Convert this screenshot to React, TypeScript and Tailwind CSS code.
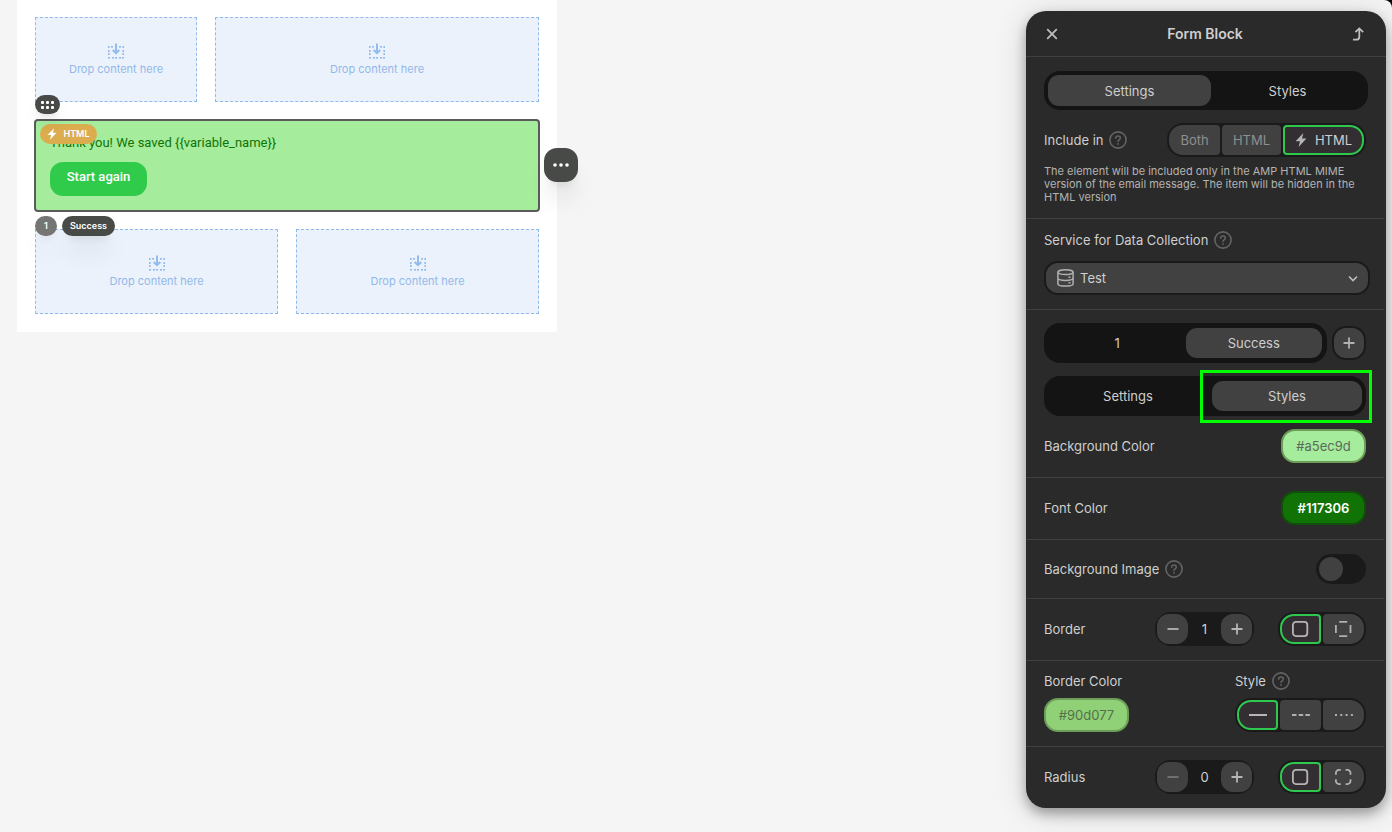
import { useState, type ReactNode } from "react";
import clsx from "clsx";

function DropIcon() {
    return (
        <svg width="18" height="16" viewBox="0 0 18 16" fill="#93bcec">
            {[1, 5, 8, 12, 15].map((x) => (
                <rect key={x} x={x} y="14" width="2" height="1.6" />
            ))}
            {[3, 7, 10].map((y) => (
                <g key={y}>
                    <rect x="1" y={y} width="1.6" height="2" />
                    <rect x="15.4" y={y} width="1.6" height="2" />
                </g>
            ))}
            <rect x="4" y="3" width="2" height="1.6" />
            <rect x="12" y="3" width="2" height="1.6" />
            <path d="M9 0.5v9.5M5.7 7L9 10.2L12.3 7" fill="none" stroke="#93bcec" strokeWidth="2" />
        </svg>
    );
}

function DropZone({ className }: { className?: string }) {
    return (
        <div
            className={clsx(
                "flex h-[85px] flex-col items-center justify-center gap-0.5 border border-dashed border-[#8fbaec] bg-[#ebf2fc] text-[11px] leading-4 text-[#93b9e8]",
                className,
            )}
        >
            <DropIcon />
            <span>Drop content here</span>
        </div>
    );
}

function BoltIcon({ className }: { className?: string }) {
    return (
        <svg className={className} viewBox="0 0 12 14" fill="currentColor">
            <path d="M8.4 0L0.6 8.2H5L3.6 14L11.4 5.6H7L8.4 0Z" />
        </svg>
    );
}

function HelpIcon() {
    return (
        <svg className="shrink-0 text-[#646464]" width="18" height="18" viewBox="0 0 18 18" fill="none" stroke="currentColor">
            <circle cx="9" cy="9" r="8.1" strokeWidth="1.6" />
            <path
                d="M6.7 7.3C6.7 5.9 7.7 5.1 9 5.1s2.3.8 2.3 2c0 1.7-2.3 1.7-2.3 3.3"
                strokeWidth="1.5"
                strokeLinecap="round"
            />
            <circle cx="9" cy="12.9" r="0.9" fill="currentColor" stroke="none" />
        </svg>
    );
}

function MinusIcon() {
    return (
        <svg width="12" height="12" viewBox="0 0 12 12" stroke="currentColor" strokeWidth="1.8">
            <path d="M0.5 6h11" />
        </svg>
    );
}

function PlusIcon() {
    return (
        <svg width="12" height="12" viewBox="0 0 12 12" stroke="currentColor" strokeWidth="1.8">
            <path d="M0.5 6h11M6 0.5v11" />
        </svg>
    );
}

function SquareIcon() {
    return (
        <svg width="17" height="16" viewBox="0 0 17 16" fill="none" stroke="currentColor" strokeWidth="1.8">
            <rect x="0.9" y="0.9" width="14.4" height="14.2" rx="3" />
        </svg>
    );
}

function SidesIcon() {
    return (
        <svg width="17" height="16" viewBox="0 0 17 16" fill="none" stroke="currentColor" strokeWidth="1.8">
            <path d="M4.2 0.9h8M4.2 15.1h8M0.9 4v8M15.5 4v8" />
        </svg>
    );
}

function CornersIcon() {
    return (
        <svg width="17" height="16" viewBox="0 0 17 16" fill="none" stroke="currentColor" strokeWidth="1.8">
            <path d="M0.9 5.8V3.9a3 3 0 0 1 3-3h1.9M10.6 0.9h1.9a3 3 0 0 1 3 3v1.9M15.5 10.2v1.9a3 3 0 0 1-3 3h-1.9M5.8 15.1H3.9a3 3 0 0 1-3-3v-1.9" />
        </svg>
    );
}

function LineIcon({ dash }: { dash?: string }) {
    return (
        <svg width="18" height="2" viewBox="0 0 18 2" stroke="currentColor" strokeWidth="2">
            <path d="M0 1h18" strokeDasharray={dash} />
        </svg>
    );
}

interface SegmentedProps {
    label: string;
    options: { name: string; content: ReactNode; width: string }[];
    initial: number;
}

function Segmented({ label, options, initial }: SegmentedProps) {
    const [active, setActive] = useState(initial);
    return (
        <div role="group" aria-label={label} className="flex gap-0.5 rounded-2xl bg-[#1a1a1a] p-0.5">
            {options.map((option, i) => (
                <button
                    key={i}
                    type="button"
                    aria-label={option.name}
                    aria-pressed={active === i}
                    onClick={() => setActive(i)}
                    className={clsx(
                        "flex h-[30px] items-center justify-center gap-2 rounded-[4px] first:rounded-l-[14px] last:rounded-r-[14px]",
                        option.width,
                        active === i ? "border-2 border-[#2ec84f] bg-[#322e32] text-[#b5b5b5]" : "bg-[#414141] text-[#8f8f8f]",
                    )}
                >
                    {option.content}
                </button>
            ))}
        </div>
    );
}

interface TabsProps {
    label: string;
    tabs: string[];
    initial: number;
    className?: string;
    tabClass?: string;
}

function Tabs({ label, tabs, initial, className, tabClass = "flex-1" }: TabsProps) {
    const [active, setActive] = useState(initial);
    return (
        <div role="tablist" aria-label={label} className={clsx("flex rounded-2xl bg-[#141414]", className)}>
            {tabs.map((tab, i) => (
                <button
                    key={tab}
                    type="button"
                    role="tab"
                    aria-selected={active === i}
                    onClick={() => setActive(i)}
                    className={clsx("rounded-[11px]", tabClass, active === i && "bg-[#414141]")}
                >
                    {tab}
                </button>
            ))}
        </div>
    );
}

function Stepper({ id, initial }: { id: string; initial: number }) {
    const [value, setValue] = useState(initial);
    return (
        <div className="flex w-[99px] rounded-2xl bg-[#1a1a1a] p-0.5">
            <button
                type="button"
                aria-label="Decrease"
                disabled={value === 0}
                onClick={() => setValue(value - 1)}
                className="flex h-[30px] w-[31px] shrink-0 items-center justify-center rounded-xl bg-[#414141] text-[#b5b5b5] disabled:text-[#777]"
            >
                <MinusIcon />
            </button>
            <input
                id={id}
                value={value}
                onChange={(e) => setValue(Number(e.target.value) || 0)}
                className="w-0 min-w-0 flex-1 bg-transparent text-center text-[#cfcfcf] outline-none"
            />
            <button
                type="button"
                aria-label="Increase"
                onClick={() => setValue(value + 1)}
                className="flex h-[30px] w-[31px] shrink-0 items-center justify-center rounded-xl bg-[#414141] text-[#b5b5b5]"
            >
                <PlusIcon />
            </button>
        </div>
    );
}

const MIME_OPTIONS = [
    { name: "Both", content: "Both", width: "w-[51px]" },
    { name: "HTML", content: "HTML", width: "w-[59px]" },
    {
        name: "AMP HTML",
        content: (
            <>
                <BoltIcon className="h-3.5 w-3" />
                <span className="text-[#cfcfcf]">HTML</span>
            </>
        ),
        width: "w-[81px]",
    },
];

const LINE_OPTIONS = [
    { name: "Solid", content: <LineIcon />, width: "w-[41px]" },
    { name: "Dashed", content: <LineIcon dash="4.5 2.2" />, width: "w-[41px] text-[#b0b0b0]!" },
    { name: "Dotted", content: <LineIcon dash="2 3.3" />, width: "w-[41px] text-[#b0b0b0]!" },
];

function Canvas() {
    return (
        <main className="ml-[17px] w-[540px] shrink-0 bg-white px-[18px] pt-[17px] pb-[18px]">
            <div className="flex gap-[18px]">
                <DropZone className="w-[162px]" />
                <DropZone className="flex-1" />
            </div>

            <section className="relative -mx-px mt-[17px] h-[93px] rounded-[4px] border-2 border-[#5b5b5b] bg-[#a5ec9d] px-3.5 pt-3.5 font-['Roboto','Liberation_Sans',sans-serif] text-[13px]">
                <p className="leading-4 text-[#117306]">Thank you! We saved {"{{variable_name}}"}</p>
                <button
                    type="button"
                    className="mt-[11px] h-[34px] w-[97px] rounded-[13px] bg-[#31cb4b] pb-1 font-medium text-white"
                >
                    Start again
                </button>

                <span className="absolute top-[3px] left-1 flex h-5 w-[57px] items-center justify-center gap-1.5 rounded-full bg-[#dbad4e] font-['Inter',sans-serif] text-[9px] font-semibold text-white">
                    <BoltIcon className="h-3 w-2.5" />
                    HTML
                </span>
                <button
                    type="button"
                    aria-label="Drag block"
                    className="absolute -top-[26px] -left-px flex h-[19px] w-[25px] items-center justify-center rounded-full bg-[#484a48] shadow-lg"
                >
                    <svg width="13" height="8" viewBox="0 0 13 8" fill="#fff">
                        {[0, 5, 10].map((x) => (
                            <g key={x}>
                                <rect x={x} y="0" width="3" height="3" rx="1" />
                                <rect x={x} y="5" width="3" height="3" rx="1" />
                            </g>
                        ))}
                    </svg>
                </button>
                <button
                    type="button"
                    aria-label="More actions"
                    className="absolute top-[27px] left-[508px] flex size-[34px] items-center justify-center rounded-[13px] bg-[#484a48] shadow-xl"
                >
                    <svg width="16" height="4" viewBox="0 0 16 4" fill="#fff">
                        <circle cx="2" cy="2" r="1.8" />
                        <circle cx="8" cy="2" r="1.8" />
                        <circle cx="14" cy="2" r="1.8" />
                    </svg>
                </button>
                <div className="absolute top-[95px] -left-px z-10 flex gap-[5px] font-['Inter',sans-serif] text-[9px] font-semibold text-white">
                    <button type="button" className="h-5 w-[22px] rounded-full bg-[#757673] shadow-xl">
                        1
                    </button>
                    <button type="button" className="h-5 w-[53px] rounded-full bg-[#484a48] shadow-xl">
                        Success
                    </button>
                </div>
            </section>

            <div className="mt-[17px] flex gap-[18px]">
                <DropZone className="flex-1" />
                <DropZone className="flex-1" />
            </div>
        </main>
    );
}

function SettingsPanel() {
    const [bgImage, setBgImage] = useState(false);

    return (
        <aside className="mt-[11px] mr-1.5 mb-6 w-[360px] shrink-0 rounded-[20px] bg-[#2a2a2a] text-[13px] leading-4 text-[#cfcfcf] shadow-[0_6px_12px_rgba(0,0,0,0.3),0_4px_32px_rgba(0,0,0,0.16)]">
            <header className="flex h-[46px] items-center justify-between border-b border-[#404040] pr-5 pl-5">
                <button type="button" aria-label="Close" className="text-[#bdbdbd]">
                    <svg width="12" height="12" viewBox="0 0 12 12" stroke="currentColor" strokeWidth="1.8">
                        <path d="M1.2 1.2l9.6 9.6M10.8 1.2L1.2 10.8" />
                    </svg>
                </button>
                <h1 className="text-sm font-semibold">Form Block</h1>
                <button type="button" aria-label="Select parent" className="text-[#bdbdbd]">
                    <svg width="14" height="14" viewBox="0 0 14 14" fill="none" stroke="currentColor" strokeWidth="1.8">
                        <path d="M1 12.7h3.2c2 0 3.1-1 3.1-3V1.6M3.4 5.2l3.9-3.8l3.9 3.8" />
                    </svg>
                </button>
            </header>

            <div className="px-[18px] pt-3.5">
                <Tabs
                    label="Form block"
                    tabs={["Settings", "Styles"]}
                    initial={0}
                    className="h-[39px] p-1"
                    tabClass="first:w-[163px] last:flex-1"
                />
            </div>

            <div className="mr-0.5 divide-y divide-[#404040] [&>section]:px-[18px]">
                <section className="pt-[13px] pb-3.5">
                    <div className="flex items-center justify-between">
                        <div className="flex items-center gap-1.5">
                            Include in
                            <HelpIcon />
                        </div>
                        <Segmented label="Include in" options={MIME_OPTIONS} initial={2} />
                    </div>
                    <p className="mt-2 text-[11px] leading-[13px] text-[#b3b3b3]">
                        The element will be included only in the AMP HTML MIME version of the email message. The item will be
                        hidden in the HTML version
                    </p>
                </section>

                <section className="pt-3 pb-3.5">
                    <div className="flex items-center gap-1.5">
                        <label htmlFor="service">Service for Data Collection</label>
                        <HelpIcon />
                    </div>
                    <div className="relative mt-3 -mr-1">
                        <select
                            id="service"
                            className="h-[34px] w-full appearance-none rounded-[14px] border-2 border-[#1a1a1a] bg-[#414141] pl-[34px] text-[#cfcfcf]"
                        >
                            <option>Test</option>
                        </select>
                        <svg
                            className="pointer-events-none absolute top-2 left-[13px]"
                            width="17"
                            height="18"
                            viewBox="0 0 17 18"
                            fill="none"
                            stroke="#b0b0b0"
                            strokeWidth="1.5"
                        >
                            <ellipse cx="8.5" cy="3.2" rx="7.6" ry="2.4" />
                            <path d="M0.9 3.2v11.5c0 1.4 3.4 2.4 7.6 2.4s7.6-1 7.6-2.4V3.2M0.9 9c0 1.4 3.4 2.4 7.6 2.4s7.6-1 7.6-2.4" />
                            <path d="M11.5 8.2h2M11.5 13.8h2" />
                        </svg>
                        <svg
                            className="pointer-events-none absolute top-3.5 right-3"
                            width="10"
                            height="8"
                            viewBox="0 0 10 8"
                            fill="none"
                            stroke="#bdbdbd"
                            strokeWidth="1.6"
                        >
                            <path d="M1 1.5l4 4l4-4" />
                        </svg>
                    </div>
                </section>

                <section className="pt-[13px] pb-3.5">
                    <div className="flex items-center gap-[5px]">
                        <Tabs label="Form state" tabs={["1", "Success"]} initial={1} className="h-10 flex-1 p-[5px]" />
                        <button
                            type="button"
                            aria-label="Add state"
                            className="flex size-[34px] items-center justify-center rounded-[14px] border-2 border-[#1a1a1a] bg-[#414141] text-[#b0b0b0]"
                        >
                            <PlusIcon />
                        </button>
                    </div>
                    <div className="relative mt-[13px]">
                        <Tabs
                            label="State settings"
                            tabs={["Settings", "Styles"]}
                            initial={1}
                            className="h-10 py-[5px] pr-1"
                            tabClass="first:flex-1 last:w-[150px]"
                        />
                        {/* callout around the Styles tab */}
                        <div className="pointer-events-none absolute -top-1.5 -right-1.5 h-[53px] w-[172px] border-3 border-[#00ff00]" />
                    </div>
                    <div className="mt-[13px] flex items-center justify-between">
                        <label htmlFor="bg-color">Background Color</label>
                        <button
                            id="bg-color"
                            type="button"
                            className="h-[34px] w-[85px] rounded-[14px] border-2 border-[#6d9d58] bg-[#a5ec9d] text-[#5b6b58]"
                        >
                            #a5ec9d
                        </button>
                    </div>
                </section>

                <section className="flex items-center justify-between pt-[13px] pb-3.5">
                    <label htmlFor="font-color">Font Color</label>
                    <button
                        id="font-color"
                        type="button"
                        className="h-[34px] w-[85px] rounded-[14px] border-2 border-[#0f4f0a] bg-[#117306] font-semibold text-white"
                    >
                        #117306
                    </button>
                </section>

                <section className="flex items-center justify-between py-3.5">
                    <div className="flex items-center gap-1.5">
                        <label htmlFor="bg-image">Background Image</label>
                        <HelpIcon />
                    </div>
                    <input
                        id="bg-image"
                        type="checkbox"
                        role="switch"
                        checked={bgImage}
                        onChange={(e) => setBgImage(e.target.checked)}
                        className="h-[30px] w-[50px] appearance-none rounded-full bg-[#1a1a1a] p-[3px] before:block before:size-6 before:rounded-full before:bg-[#414141] checked:bg-[#2ec84f] checked:before:ml-auto"
                    />
                </section>

                <section className="flex items-center pt-[13px] pb-3.5">
                    <label htmlFor="border-width" className="flex-1">
                        Border
                    </label>
                    <Stepper id="border-width" initial={1} />
                    <div className="ml-6">
                        <Segmented
                            label="Border sides"
                            initial={0}
                            options={[
                                { name: "All sides", content: <SquareIcon />, width: "w-[41px]" },
                                { name: "Separate sides", content: <SidesIcon />, width: "w-[41px] text-[#b0b0b0]!" },
                            ]}
                        />
                    </div>
                </section>

                <section className="flex justify-between pt-[11px] pb-3.5">
                    <div>
                        <label htmlFor="border-color" className="flex h-[18px] items-center">
                            Border Color
                        </label>
                        <button
                            id="border-color"
                            type="button"
                            className="mt-2 h-[34px] w-[85px] rounded-[14px] border-2 border-[#6d9d58] bg-[#90d077] text-[#55704a]"
                        >
                            #90d077
                        </button>
                    </div>
                    <div>
                        <div className="mb-2 flex h-[18px] items-center gap-1.5">
                            Style
                            <HelpIcon />
                        </div>
                        <Segmented label="Border style" options={LINE_OPTIONS} initial={0} />
                    </div>
                </section>

                <section className="flex items-center pt-[13px] pb-3.5">
                    <label htmlFor="radius" className="flex-1">
                        Radius
                    </label>
                    <Stepper id="radius" initial={0} />
                    <div className="ml-6">
                        <Segmented
                            label="Radius corners"
                            initial={0}
                            options={[
                                { name: "All corners", content: <SquareIcon />, width: "w-[41px]" },
                                { name: "Separate corners", content: <CornersIcon />, width: "w-[41px] text-[#b0b0b0]!" },
                            ]}
                        />
                    </div>
                </section>
            </div>
        </aside>
    );
}

export default function App() {
    return (
        <div className="bg-black font-['Inter',sans-serif]">
            <div className="flex min-h-screen items-start justify-between overflow-hidden rounded-tr-lg bg-[#f5f5f5]">
                <Canvas />
                <SettingsPanel />
            </div>
        </div>
    );
}
